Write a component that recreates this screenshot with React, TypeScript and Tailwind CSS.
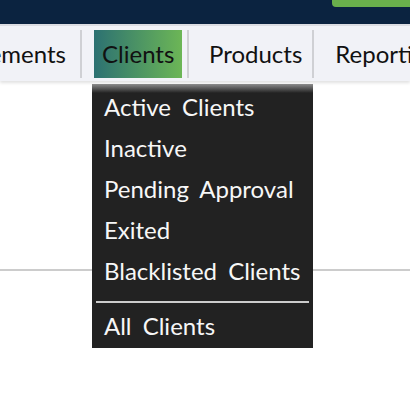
import React from "react"

const items = ["Active Clients", "Inactive", "Pending Approval", "Exited", "Blacklisted Clients"]

export default function App() {
  return (
    <div className="w-[410px] h-[402px] bg-white overflow-hidden font-['Lato',sans-serif] text-[#111]">
      {/* top bar */}
      <div className="h-[24px] bg-[#0b2340] flex justify-end">
        <div className="w-[78px] h-[7px] bg-[#6ab04c] rounded-bl-[4px]" />
      </div>
      <div className="h-[2px] bg-[#dcdde3]" />

      {/* nav */}
      <nav className="relative z-10 h-[55px] bg-[#f1f2f7] shadow-[0_2px_3px_rgba(0,0,0,0.12)]">
        <ul className="flex items-center h-full text-[24px]">
          <li className="w-[82px] shrink-0 h-[48px] flex items-center justify-end overflow-hidden pr-[5px] border-r-2 border-[#cfd0d4]">
            <a className="shrink-0 px-[9px]">Settlements</a>
          </li>
          <li className="shrink-0 h-[48px] flex items-center pl-[12px] pr-[5px] border-r-2 border-[#cfd0d4]">
            <a className="relative w-[88px] h-[48px] flex items-center pl-[8px] bg-[linear-gradient(to_right,#2c7172,#6cb656)]">
              Clients
              <div className="absolute left-[-2px] top-[54px] w-[221px] bg-[linear-gradient(to_bottom,#8d8d8d_0px,#222222_9px)] text-[#f7f7f7] [word-spacing:5px] pt-[2px] pb-[2px]">
                {items.map((t) => (
                  <div key={t} className="h-[41px] leading-[41px] pl-[12px] whitespace-nowrap">
                    {t}
                  </div>
                ))}
                <div className="mt-[10px] mx-[4px] h-[2px] bg-[#cccccc]" />
                <div className="mt-[2px] h-[41px] leading-[41px] pl-[12px] whitespace-nowrap">All Clients</div>
              </div>
            </a>
          </li>
          <li className="shrink-0 h-[48px] flex items-center pl-[11px] pr-[1px] border-r-2 border-[#cfd0d4]">
            <a className="px-[9px]">Products</a>
          </li>
          <li className="shrink-0 h-[48px] flex items-center pl-[12px]">
            <a className="px-[9px] whitespace-nowrap">Reporting</a>
          </li>
        </ul>
      </nav>

      {/* page content */}
      <div className="h-[190px] border-b-2 border-[#cccccc]" />
    </div>
  )
}
